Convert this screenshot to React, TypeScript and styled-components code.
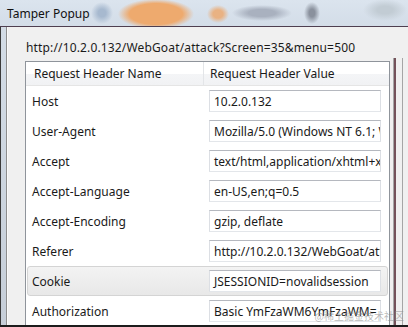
import { createGlobalStyle } from "styled-components";
import styled from "styled-components";

const GlobalStyle = createGlobalStyle`
	html, body {
		margin: 0;
		padding: 0;
		background: #f0f0f0;
	}
	body {
		font-family: "Noto Sans", "Open Sans", "Liberation Sans", sans-serif;
		font-size: 12px;
		color: #1a1a1a;
	}
`;

const headers: [string, string][] = [
	["Host", "10.2.0.132"],
	["User-Agent", "Mozilla/5.0 (Windows NT 6.1; WOW64; rv:24.0)"],
	["Accept", "text/html,application/xhtml+xml,application/xml"],
	["Accept-Language", "en-US,en;q=0.5"],
	["Accept-Encoding", "gzip, deflate"],
	["Referer", "http://10.2.0.132/WebGoat/attack?Screen=35"],
	["Cookie", "JSESSIONID=novalidsession"],
	["Authorization", "Basic YmFzaWM6YmFzaWM="],
];

const Window = styled.div`
	position: relative;
	width: 408px;
	height: 327px;
	overflow: hidden;
	box-sizing: border-box;
	border-bottom: 2px solid #1c1c1c;
	display: flex;
	flex-direction: column;
`;

// blurred aero glass behind the caption
const TitleBar = styled.div`
	height: 26px;
	flex: none;
	display: flex;
	align-items: center;
	padding-left: 7px;
	border-bottom: 1px solid #4e3f50;
	background:
		radial-gradient(ellipse 38px 15px at 156px 14px, #eeaa6e 70%, rgba(238, 170, 110, 0) 100%),
		radial-gradient(ellipse 11px 9px at 218px 14px, #e9b283 45%, rgba(233, 178, 131, 0) 100%),
		radial-gradient(ellipse 30px 8px at 262px 13px, #a9b1bf 45%, rgba(169, 177, 191, 0) 100%),
		radial-gradient(ellipse 8px 11px at 312px 13px, #8a919d 35%, rgba(138, 145, 157, 0) 100%),
		radial-gradient(ellipse 11px 11px at 102px 13px, #a7b9cf 35%, rgba(167, 185, 207, 0) 100%),
		radial-gradient(ellipse 22px 11px at 385px 10px, #c2ccd4 35%, rgba(194, 204, 212, 0) 100%),
		linear-gradient(#dbe4ee, #d3dde8);
`;

const Title = styled.span`
	font-size: 12px;
	color: #111;
`;

const Frame = styled.div`
	flex: 1;
	display: flex;
	min-height: 0;
	background: #cbd5df;
`;

const FrameEdge = styled.div`
	width: 5px;
	flex: none;
	border-left: 1px solid #3a3a3a;
	border-right: 1px solid #8d8d8d;
	background: linear-gradient(#d3dce6, #c6ced8);
`;

const Client = styled.div`
	flex: 1;
	background: #f0f0f0;
	padding: 13px 0 0 0;
	border-left: 1px solid #fafafa;
	display: flex;
	flex-direction: column;
`;

const UrlLabel = styled.div`
	margin-left: 18px;
	line-height: 16px;
	height: 16px;
	white-space: nowrap;
	letter-spacing: 0.15px;
`;

const ContentRow = styled.div`
	display: flex;
	margin-top: 2px;
	flex: 1;
`;

const Table = styled.div`
	margin-left: 17px;
	margin-top: 3px;
	width: 365px;
	flex: none;
	box-sizing: border-box;
	border: 1px solid #8f949b;
	border-bottom: none;
	background: #fff;
`;

const HeaderRow = styled.div`
	display: grid;
	grid-template-columns: 178px 1fr;
	height: 23px;
	border-bottom: 1px solid #e5e5e5;
	background: linear-gradient(#ffffff 0%, #ffffff 50%, #f4f5f7 51%, #f1f2f4 100%);
`;

const HeaderCell = styled.div<{ $first?: boolean }>`
	display: flex;
	align-items: center;
	padding-left: ${(p) => (p.$first ? 8 : 6)}px;
	border-right: ${(p) => (p.$first ? "1px solid #e3e5e8" : "none")};
	white-space: nowrap;
`;

const Row = styled.div<{ $hot?: boolean }>`
	display: grid;
	grid-template-columns: 176px 1fr;
	height: 28px;
	margin: 0 1px;
	border: 1px solid ${(p) => (p.$hot ? "#d4d4d4" : "transparent")};
	border-radius: 3px;
	background: ${(p) => (p.$hot ? "linear-gradient(#f3f3f3, #e8e8e8)" : "transparent")};
`;

const Label = styled.div`
	display: flex;
	align-items: center;
	padding-left: 4px;
	white-space: nowrap;
`;

const ValueCell = styled.div`
	display: flex;
	align-items: center;
	padding-left: 5px;
`;

const ValueBox = styled.div`
	width: 172px;
	height: 22px;
	box-sizing: border-box;
	border: 1px solid;
	border-color: #b5b8bf #dcdfe4 #e3e6ea #dcdfe4;
	background: #fff;
	padding-left: 4px;
	display: flex;
	align-items: center;
	white-space: nowrap;
	overflow: hidden;
`;

const Splitter = styled.div`
	margin-left: 3px;
	display: flex;
	gap: 6px;
`;

const SplitLine = styled.div<{ $dark?: boolean }>`
	width: ${(p) => (p.$dark ? 2 : 1)}px;
	border-left: ${(p) => (p.$dark ? "1px solid #a7a7a7" : "none")};
	background: ${(p) => (p.$dark ? "#74525a" : "#a5a5a5")};
`;

const Watermark = styled.div`
	position: absolute;
	right: 4px;
	bottom: 2px;
	font-family: "Noto Sans CJK SC", sans-serif;
	font-size: 10px;
	color: rgba(140, 140, 140, 0.6);
	white-space: nowrap;
`;

export default function App() {
	return (
		<>
			<GlobalStyle />
			<Window>
				<TitleBar>
					<Title>Tamper Popup</Title>
				</TitleBar>
				<Frame>
					<FrameEdge />
					<Client>
						<UrlLabel>http://10.2.0.132/WebGoat/attack?Screen=35&amp;menu=500</UrlLabel>
						<ContentRow>
							<Table>
								<HeaderRow>
									<HeaderCell $first>Request Header Name</HeaderCell>
									<HeaderCell>Request Header Value</HeaderCell>
								</HeaderRow>
								{headers.map(([name, value]) => (
									<Row key={name} $hot={name === "Cookie"}>
										<Label>{name}</Label>
										<ValueCell>
											<ValueBox>{value}</ValueBox>
										</ValueCell>
									</Row>
								))}
							</Table>
							<Splitter>
								<SplitLine $dark />
								<SplitLine />
							</Splitter>
						</ContentRow>
					</Client>
				</Frame>
				<Watermark>@稀土掘金技术社区</Watermark>
			</Window>
		</>
	);
}
